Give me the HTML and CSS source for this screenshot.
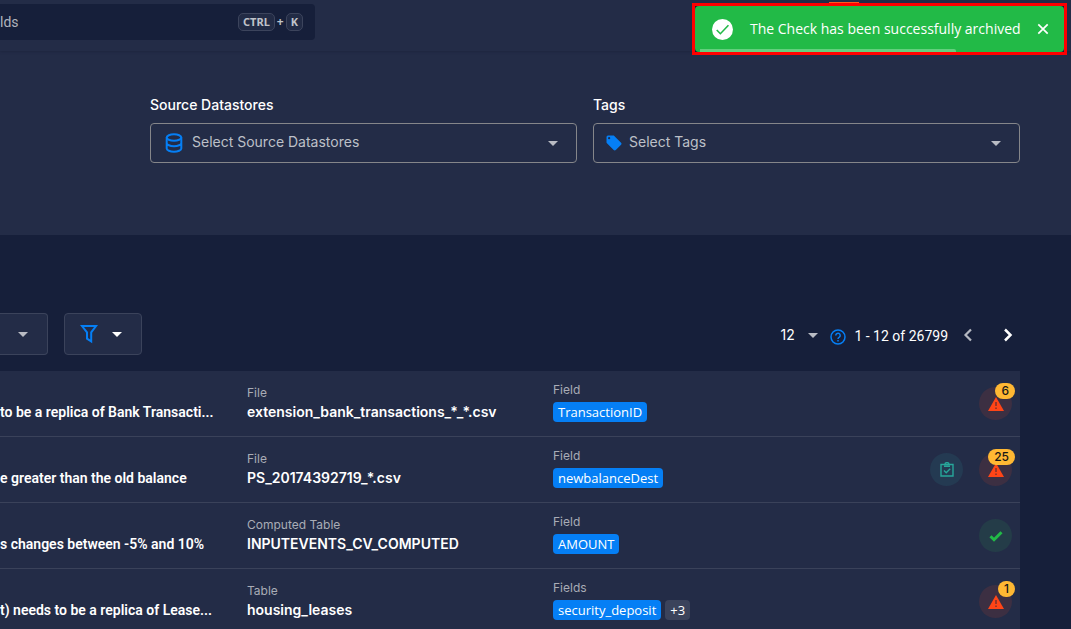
FILE: index.html
```
<!DOCTYPE html>
<html lang="en">
<head>
<meta charset="utf-8">
<meta name="viewport" content="width=device-width, initial-scale=1">
<title>Checks</title>
<link rel="stylesheet" href="styles.css">
</head>
<body>
<header class="topbar">
  <label class="search">
    <input class="search-input" type="text" placeholder="lds" aria-label="Search">
    <span class="shortcut"><kbd>CTRL</kbd>+<kbd>K</kbd></span>
  </label>
  <span class="topbar-marker"></span>
</header>

<div class="toast" role="status">
  <div class="toast-body">
    <svg class="toast-icon" viewBox="0 0 24 24" aria-hidden="true"><circle cx="12" cy="12" r="12" fill="#fff"/><path d="M5.4 12.6l4.2 4.2L18.8 7.2" fill="none" stroke="#22ba47" stroke-width="1.8"/></svg>
    <span class="toast-text">The Check has been successfully archived</span>
    <button class="icon-button" type="button" aria-label="Close"><svg width="12" height="12" viewBox="0 0 12 12"><path d="M1.3 1.3l9.4 9.4M10.7 1.3l-9.4 9.4" stroke="#fff" stroke-width="1.7"/></svg></button>
  </div>
  <div class="toast-progress"></div>
</div>

<section class="filters">
  <div class="field">
    <label class="field-label" for="stores">Source Datastores</label>
    <div class="field-box">
      <svg width="18" height="20" viewBox="0 0 18 20" fill="none" stroke="#057ff5" stroke-width="2" aria-hidden="true"><ellipse cx="9" cy="4.5" rx="7.3" ry="3.2"/><path d="M1.7 4.5v11c0 1.8 3.3 3.2 7.3 3.2s7.3-1.4 7.3-3.2v-11M1.7 10c0 1.8 3.3 3.2 7.3 3.2s7.3-1.4 7.3-3.2"/></svg>
      <select id="stores" class="field-select"><option>Select Source Datastores</option></select>
      <svg class="arrow" viewBox="0 0 10 5" aria-hidden="true"><path d="M0 0h10L5 5z"/></svg>
    </div>
  </div>
  <div class="field">
    <label class="field-label" for="tags">Tags</label>
    <div class="field-box field-box-tags">
      <svg width="18" height="18" viewBox="0 0 24 24" fill="#057ff5" aria-hidden="true"><path d="M5.5 7A1.5 1.5 0 1 1 5.5 4a1.5 1.5 0 0 1 0 3M21.4 11.6l-9-9C12 2.2 11.5 2 11 2H4a2 2 0 0 0-2 2v7c0 .6.2 1.1.6 1.4l9 9c.4.4.9.6 1.4.6s1.1-.2 1.4-.6l7-7c.4-.4.6-.9.6-1.4s-.2-1.1-.6-1.4z"/></svg>
      <select id="tags" class="field-select"><option>Select Tags</option></select>
      <svg class="arrow" viewBox="0 0 10 5" aria-hidden="true"><path d="M0 0h10L5 5z"/></svg>
    </div>
  </div>
</section>

<main class="content">
  <div class="toolbar">
    <button class="tool-button tool-sort" type="button" aria-label="Sort"><svg class="arrow" viewBox="0 0 10 5"><path d="M0 0h10L5 5z"/></svg></button>
    <button class="tool-button tool-filter" type="button" aria-label="Filter"><svg width="18" height="20" viewBox="0 0 18 20" fill="none" stroke="#057ff5" stroke-width="2"><path d="M2 2h14l-4.8 6.4v9L7 14.6V8.400z"/></svg><svg class="arrow arrow-light" viewBox="0 0 10 5"><path d="M0 0h10L5 5z"/></svg></button>
    <div class="pager">
      <label class="page-size"><select class="page-select" aria-label="Rows per page"><option>12</option></select><svg class="arrow" viewBox="0 0 10 5"><path d="M0 0h10L5 5z"/></svg></label>
      <svg class="help" width="16" height="16" viewBox="0 0 16 16" fill="none" stroke="#057ff5" stroke-width="1.500" aria-hidden="true"><circle cx="8" cy="8" r="7"/><path d="M5.800 6.500a2.200 2.200 0 1 1 3.500 1.700C8.400 8.800 8 9.100 8 10M8 11v1.500"/></svg>
      <span class="range">1 - 12 of 26799</span>
      <button class="icon-button" type="button" aria-label="Previous page"><svg width="10" height="14" viewBox="0 0 10 14"><path d="M8 1.500L2.500 7 8 12.500" fill="none" stroke="#b5b8c1" stroke-width="2.200"/></svg></button>
      <button class="icon-button next" type="button" aria-label="Next page"><svg width="10" height="14" viewBox="0 0 10 14"><path d="M2 1.500L7.500 7 2 12.500" fill="none" stroke="#fff" stroke-width="2.500"/></svg></button>
    </div>
  </div>

  <table class="checks">
    <colgroup><col class="col-name"><col class="col-source"><col><col class="col-status"></colgroup>
    <tbody>
      <tr>
        <td><div class="name">to be a replica of Bank Transacti...</div></td>
        <td><div class="caption">File</div><div class="value">extension_bank_transactions_*_*.csv</div></td>
        <td><div class="caption">Field</div><div class="chips"><span class="chip">TransactionID</span></div></td>
        <td><div class="status"><span class="dot dot-alert"><svg width="16" height="14" viewBox="0 0 16 14"><path d="M8 0l8 14H0z" fill="#ff4517"/><path d="M8 5v4M8 10.500v1.500" stroke="#5d2b30" stroke-width="1.200"/></svg><span class="badge">6</span></span></div></td>
      </tr>
      <tr>
        <td><div class="name">e greater than the old balance</div></td>
        <td><div class="caption">File</div><div class="value">PS_20174392719_*.csv</div></td>
        <td><div class="caption">Field</div><div class="chips"><span class="chip">newbalanceDest</span></div></td>
        <td><div class="status"><span class="dot dot-task"><svg width="14" height="15" viewBox="0 0 14 15" fill="none" stroke="#27a69a" stroke-width="1.400"><path d="M1 2.500h12v11.500H1zM4 4.200h6M5 2.200a2 1.600 0 0 1 4 0M4 8.500l2.200 2.200L10.200 6.700"/></svg></span><span class="dot dot-alert"><svg width="16" height="14" viewBox="0 0 16 14"><path d="M8 0l8 14H0z" fill="#ff4517"/><path d="M8 5v4M8 10.500v1.500" stroke="#5d2b30" stroke-width="1.200"/></svg><span class="badge">25</span></span></div></td>
      </tr>
      <tr>
        <td><div class="name">s changes between -5% and 10%</div></td>
        <td><div class="caption">Computed Table</div><div class="value">INPUTEVENTS_CV_COMPUTED</div></td>
        <td><div class="caption">Field</div><div class="chips"><span class="chip">AMOUNT</span></div></td>
        <td><div class="status"><span class="dot dot-ok"><svg width="14" height="12" viewBox="0 0 14 12"><path d="M1.500 6.200l3.500 3.500 7.500-7.500" fill="none" stroke="#22ba47" stroke-width="3"/></svg></span></div></td>
      </tr>
      <tr>
        <td><div class="name">t) needs to be a replica of Lease...</div></td>
        <td><div class="caption">Table</div><div class="value">housing_leases</div></td>
        <td><div class="caption">Fields</div><div class="chips"><span class="chip">security_deposit</span><span class="chip chip-more">+3</span></div></td>
        <td><div class="status"><span class="dot dot-alert"><svg width="16" height="14" viewBox="0 0 16 14"><path d="M8 0l8 14H0z" fill="#ff4517"/><path d="M8 5v4M8 10.500v1.500" stroke="#5d2b30" stroke-width="1.200"/></svg><span class="badge">1</span></span></div></td>
      </tr>
    </tbody>
  </table>
</main>
</body>
</html>
```
FILE: styles.css
```
* { box-sizing: border-box; }
body {
  margin: 0;
  background: #161f3a;
  color: #fff;
  font: 14px/20px Inter, "Open Sans", sans-serif;
  overflow-x: hidden;
}
button, select, input { font: inherit; color: inherit; }
svg { display: block; flex: none; }

.topbar {
  position: relative;
  display: flex;
  align-items: flex-start;
  height: 51px;
  padding-top: 4px;
  background: #232c47;
  box-shadow: 0 1px 2px #1e2640;
}
.search {
  display: flex;
  align-items: center;
  width: 315px;
  height: 36px;
  padding-right: 12px;
  background: #161f3a;
  border-radius: 0 4px 4px 0;
}
.search-input {
  flex: 1;
  min-width: 0;
  padding: 0;
  border: 0;
  background: none;
  outline: 0;
  font-family: Roboto, sans-serif;
}
.search-input::placeholder { color: #b0b3bd; opacity: 1; }
.shortcut {
  display: flex;
  align-items: center;
  gap: 2px;
  color: #c0c3ca;
  font: bold 12px/16px "Noto Sans", sans-serif;
}
.shortcut kbd {
  padding: 0 4px;
  border: 1px solid #3c445c;
  border-radius: 5px;
  background: #222b45;
  font: bold 11px/16px "Noto Sans", sans-serif;
}
.topbar-marker {
  position: absolute;
  top: 2px;
  right: 212px;
  width: 30px;
  height: 12px;
  background: #ff5a1f;
}

.toast {
  position: absolute;
  z-index: 2;
  top: 3px;
  right: 4px;
  width: 375px;
  border: 3px solid #f00;
  background: #161f3a;
}
.toast-body {
  display: flex;
  align-items: center;
  height: 46px;
  padding: 0 15px 0 17px;
  border-radius: 4px;
  background: #22ba47;
}
.toast-icon { width: 21px; height: 21px; }
.toast-text {
  flex: 1;
  margin-left: 17px;
  font-family: "Open Sans", sans-serif;
  white-space: nowrap;
}
.toast-progress {
  position: absolute;
  bottom: 0;
  left: 5px;
  width: 256px;
  height: 3px;
  border-radius: 0 2px 0 0;
  background: #64cf7e;
}
.icon-button {
  display: flex;
  padding: 0;
  border: 0;
  background: none;
  cursor: pointer;
}

.filters {
  display: grid;
  grid-template-columns: 1fr 1fr;
  gap: 16px;
  padding: 44px 51px 72px 150px;
  background: #232c47;
}
.field-label { display: block; margin-bottom: 8px; font-weight: 500; }
.field-box {
  display: flex;
  align-items: center;
  height: 40px;
  padding: 0 18px 0 14px;
  border: 1px solid #85868a;
  border-radius: 4px;
}
.field-box-tags { padding-left: 11px; }
.field-select {
  flex: 1;
  min-width: 0;
  margin-left: 9px;
  padding: 0 0 2px;
  border: 0;
  background: none;
  appearance: none;
  outline: 0;
  color: #bdc0c8;
}
.field-box-tags .field-select { margin-left: 6px; }
.arrow { width: 10px; height: 5px; fill: #b9bcc4; }
.arrow-light { fill: #fff; }

.content { padding: 78px 51px 0 0; }
.toolbar {
  display: flex;
  align-items: center;
  margin-bottom: 16px;
}
.tool-button {
  display: flex;
  align-items: center;
  height: 42px;
  border: 1px solid #3b435b;
  border-radius: 4px;
  background: #232c47;
}
.tool-sort {
  justify-content: flex-end;
  width: 48px;
  padding: 0 19px 0 0;
  border-left: 0;
  border-radius: 0 4px 4px 0;
}
.tool-filter {
  gap: 14px;
  width: 78px;
  margin-left: 16px;
  padding: 0 15px;
}
.pager {
  display: flex;
  align-items: center;
  margin-left: auto;
  padding: 2px 7px 0 0;
}
.page-size { display: flex; align-items: center; gap: 12px; }
.page-select {
  width: 16px;
  padding: 0;
  border: 0;
  background: none;
  appearance: none;
  outline: 0;
}
.help { margin: 3px 8px 0 12px; }
.range {
  margin-right: 15px;
  padding-top: 2px;
  font-family: Roboto, sans-serif;
  white-space: nowrap;
}
.next { margin-left: 30px; }

.checks {
  width: 100%;
  table-layout: fixed;
  border-spacing: 0;
  background: #232c47;
}
.col-name { width: 247px; }
.col-source { width: 306px; }
.col-status { width: 120px; }
.checks td {
  height: 66px;
  padding: 0;
  border-bottom: 1px solid #3a425a;
  white-space: nowrap;
}
.name {
  padding-top: 17px;
  font-family: Roboto, sans-serif;
  font-weight: 600;
}
.caption { color: #a9acb6; font-size: 12px; line-height: 16px; }
.value { padding: 1px 0; font-weight: 600; }
.chips { display: flex; gap: 4px; padding-top: 4px; padding-bottom: 4px; }
.chip {
  padding: 0 5px;
  border-radius: 4px;
  background: #057ff5;
  font-family: "Open Sans", sans-serif;
  font-size: 13px;
  font-weight: 500;
}
.chip-more { background: #3b435b; }
.status {
  display: flex;
  justify-content: flex-end;
  gap: 16px;
  padding-right: 8px;
}
.dot {
  position: relative;
  display: flex;
  align-items: center;
  justify-content: center;
  width: 33px;
  height: 33px;
  border-radius: 50%;
}
.dot-alert { background: #3c2f42; }
.dot-task { background: #243a52; }
.dot-ok { background: #243c48; }
.badge {
  position: absolute;
  top: -4px;
  right: -3px;
  padding: 0 6px;
  border-radius: 8px;
  background: #ffb833;
  color: #171717;
  font-size: 12px;
  font-weight: 500;
  line-height: 16px;
}
```
